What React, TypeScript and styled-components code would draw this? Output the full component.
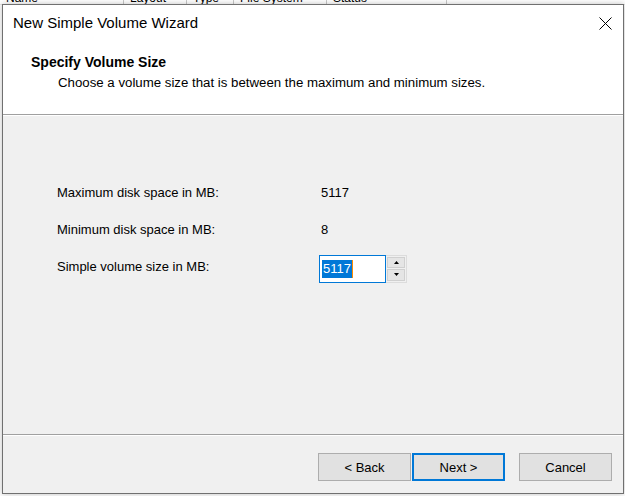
import React, { useState } from 'react';
import styled, { createGlobalStyle, css } from 'styled-components';

const GlobalStyle = createGlobalStyle`
  html, body {
    margin: 0;
    padding: 0;
    background: #ffffff;
    font-family: "Liberation Sans", Arial, sans-serif;
    overflow: hidden;
  }
`;

const Desktop = styled.div`
  position: relative;
  width: 625px;
  height: 496px;
  overflow: hidden;
  background: #ffffff;
`;

const ListHeader = styled.div`
  display: flex;
  height: 4px;
  overflow: hidden;
  border-bottom: 1px solid #e5e5e5;
`;

const ListColumn = styled.div<{ w: number }>`
  width: ${p => p.w}px;
  flex: none;
  border-right: 1px solid #c8c8c8;
  font-size: 12px;
  line-height: 12px;
  color: #000;
  padding-left: 6px;
  margin-top: -8px;
  box-sizing: border-box;
`;

const Window = styled.div`
  position: absolute;
  left: 2px;
  top: 4px;
  width: 622px;
  height: 490px;
  box-sizing: border-box;
  border: 1px solid #707070;
  background: #f0f0f0;
  display: flex;
  flex-direction: column;
  box-shadow: 0 0 6px rgba(0, 0, 0, 0.25);
`;

const TitleBar = styled.div`
  height: 32px;
  flex: none;
  background: #ffffff;
  display: flex;
  align-items: center;
  justify-content: space-between;
  padding: 0 0 0 10px;
`;

const TitleText = styled.span`
  font-size: 15px;
  color: #000;
  padding-top: 3px;
`;

const CloseButton = styled.button`
  width: 36px;
  height: 32px;
  border: none;
  background: transparent;
  display: flex;
  align-items: center;
  justify-content: center;
  padding: 0;
  padding-top: 4px;
  cursor: pointer;
`;

const Header = styled.div`
  height: 78px;
  flex: none;
  background: #ffffff;
  border-bottom: 1px solid #a0a0a0;
  padding: 17px 0 0 28px;
  box-sizing: border-box;
`;

const HeaderTitle = styled.div`
  font-size: 14px;
  font-weight: bold;
  color: #000;
`;

const HeaderSub = styled.div`
  font-size: 13.25px;
  color: #000;
  margin: 5px 0 0 27px;
`;

const Body = styled.div`
  flex: 1;
  border-top: 1px solid #ffffff;
  border-bottom: 1px solid #a0a0a0;
  padding: 58px 0 0 54px;
  display: grid;
  grid-template-columns: 262px auto;
  grid-auto-rows: 37px;
  align-content: start;
  align-items: center;
`;

const Label = styled.span`
  font-size: 13px;
  color: #000;
`;

const Value = styled.span`
  font-size: 13px;
  color: #000;
  padding-left: 2px;
`;

const Spinner = styled.div`
  display: flex;
  height: 28px;
  margin-top: 4px;
`;

const SpinInput = styled.div`
  width: 67px;
  height: 28px;
  box-sizing: border-box;
  border: 1px solid #0078d7;
  background: #fff;
  padding: 3px 0 0 2px;
`;

const Selected = styled.span`
  background: #0078d7;
  color: #fff;
  font-size: 13px;
  padding: 1px 1px 2px 1px;
  border-right: 1px solid #ff8c00;
`;

const SpinButtons = styled.div`
  display: flex;
  flex-direction: column;
  width: 21px;
  height: 28px;
  box-sizing: border-box;
  border: 1px solid #dcdcdc;
  border-left: none;
  background: #f0f0f0;
  padding: 1px;
  gap: 1px;
`;

const SpinButton = styled.div`
  flex: 1;
  background: #e5e5e5;
  border: 1px solid #d0d0d0;
  display: flex;
  align-items: center;
  justify-content: center;
`;

const Footer = styled.div`
  flex: none;
  height: 58px;
  border-top: 1px solid #ffffff;
  display: flex;
  align-items: flex-start;
  padding: 17px 0 0 315px;
  box-sizing: border-box;
`;

const Button = styled.button<{ primary?: boolean; gapLeft?: number }>`
  width: 93px;
  height: 28px;
  box-sizing: border-box;
  border: 1px solid #adadad;
  background: #e1e1e1;
  font-family: "Liberation Sans", Arial, sans-serif;
  font-size: 13px;
  color: #000;
  margin-left: ${p => p.gapLeft ?? 0}px;
  padding: 0;
  ${p =>
    p.primary &&
    css`
      border: 2px solid #0078d7;
    `}
`;

const Arrow = ({ up }: { up?: boolean }) => (
  <svg width="5" height="3" viewBox="0 0 5 3">
    <path d={up ? 'M2.5 0 L5 3 L0 3 Z' : 'M0 0 L5 0 L2.5 3 Z'} fill="#000" />
  </svg>
);

export default function App() {
  const [value] = useState('5117');
  return (
    <Desktop>
      <GlobalStyle />
      <ListHeader>
        <ListColumn w={124}>Name</ListColumn>
        <ListColumn w={63}>Layout</ListColumn>
        <ListColumn w={47}>Type</ListColumn>
        <ListColumn w={93}>File System</ListColumn>
        <ListColumn w={120}>Status</ListColumn>
      </ListHeader>
      <Window>
        <TitleBar>
          <TitleText>New Simple Volume Wizard</TitleText>
          <CloseButton aria-label="Close">
            <svg width="13" height="13" viewBox="0 0 13 13">
              <path d="M0.5 0.5 L12.5 12.5 M12.5 0.5 L0.5 12.5" stroke="#000" strokeWidth="1" />
            </svg>
          </CloseButton>
        </TitleBar>
        <Header>
          <HeaderTitle>Specify Volume Size</HeaderTitle>
          <HeaderSub>Choose a volume size that is between the maximum and minimum sizes.</HeaderSub>
        </Header>
        <Body>
          <Label>Maximum disk space in MB:</Label>
          <Value>5117</Value>
          <Label>Minimum disk space in MB:</Label>
          <Value>8</Value>
          <Label>Simple volume size in MB:</Label>
          <Spinner>
            <SpinInput>
              <Selected>{value}</Selected>
            </SpinInput>
            <SpinButtons>
              <SpinButton><Arrow up /></SpinButton>
              <SpinButton><Arrow /></SpinButton>
            </SpinButtons>
          </Spinner>
        </Body>
        <Footer>
          <Button>&lt; Back</Button>
          <Button primary gapLeft={1}>Next &gt;</Button>
          <Button gapLeft={14}>Cancel</Button>
        </Footer>
      </Window>
    </Desktop>
  );
}
